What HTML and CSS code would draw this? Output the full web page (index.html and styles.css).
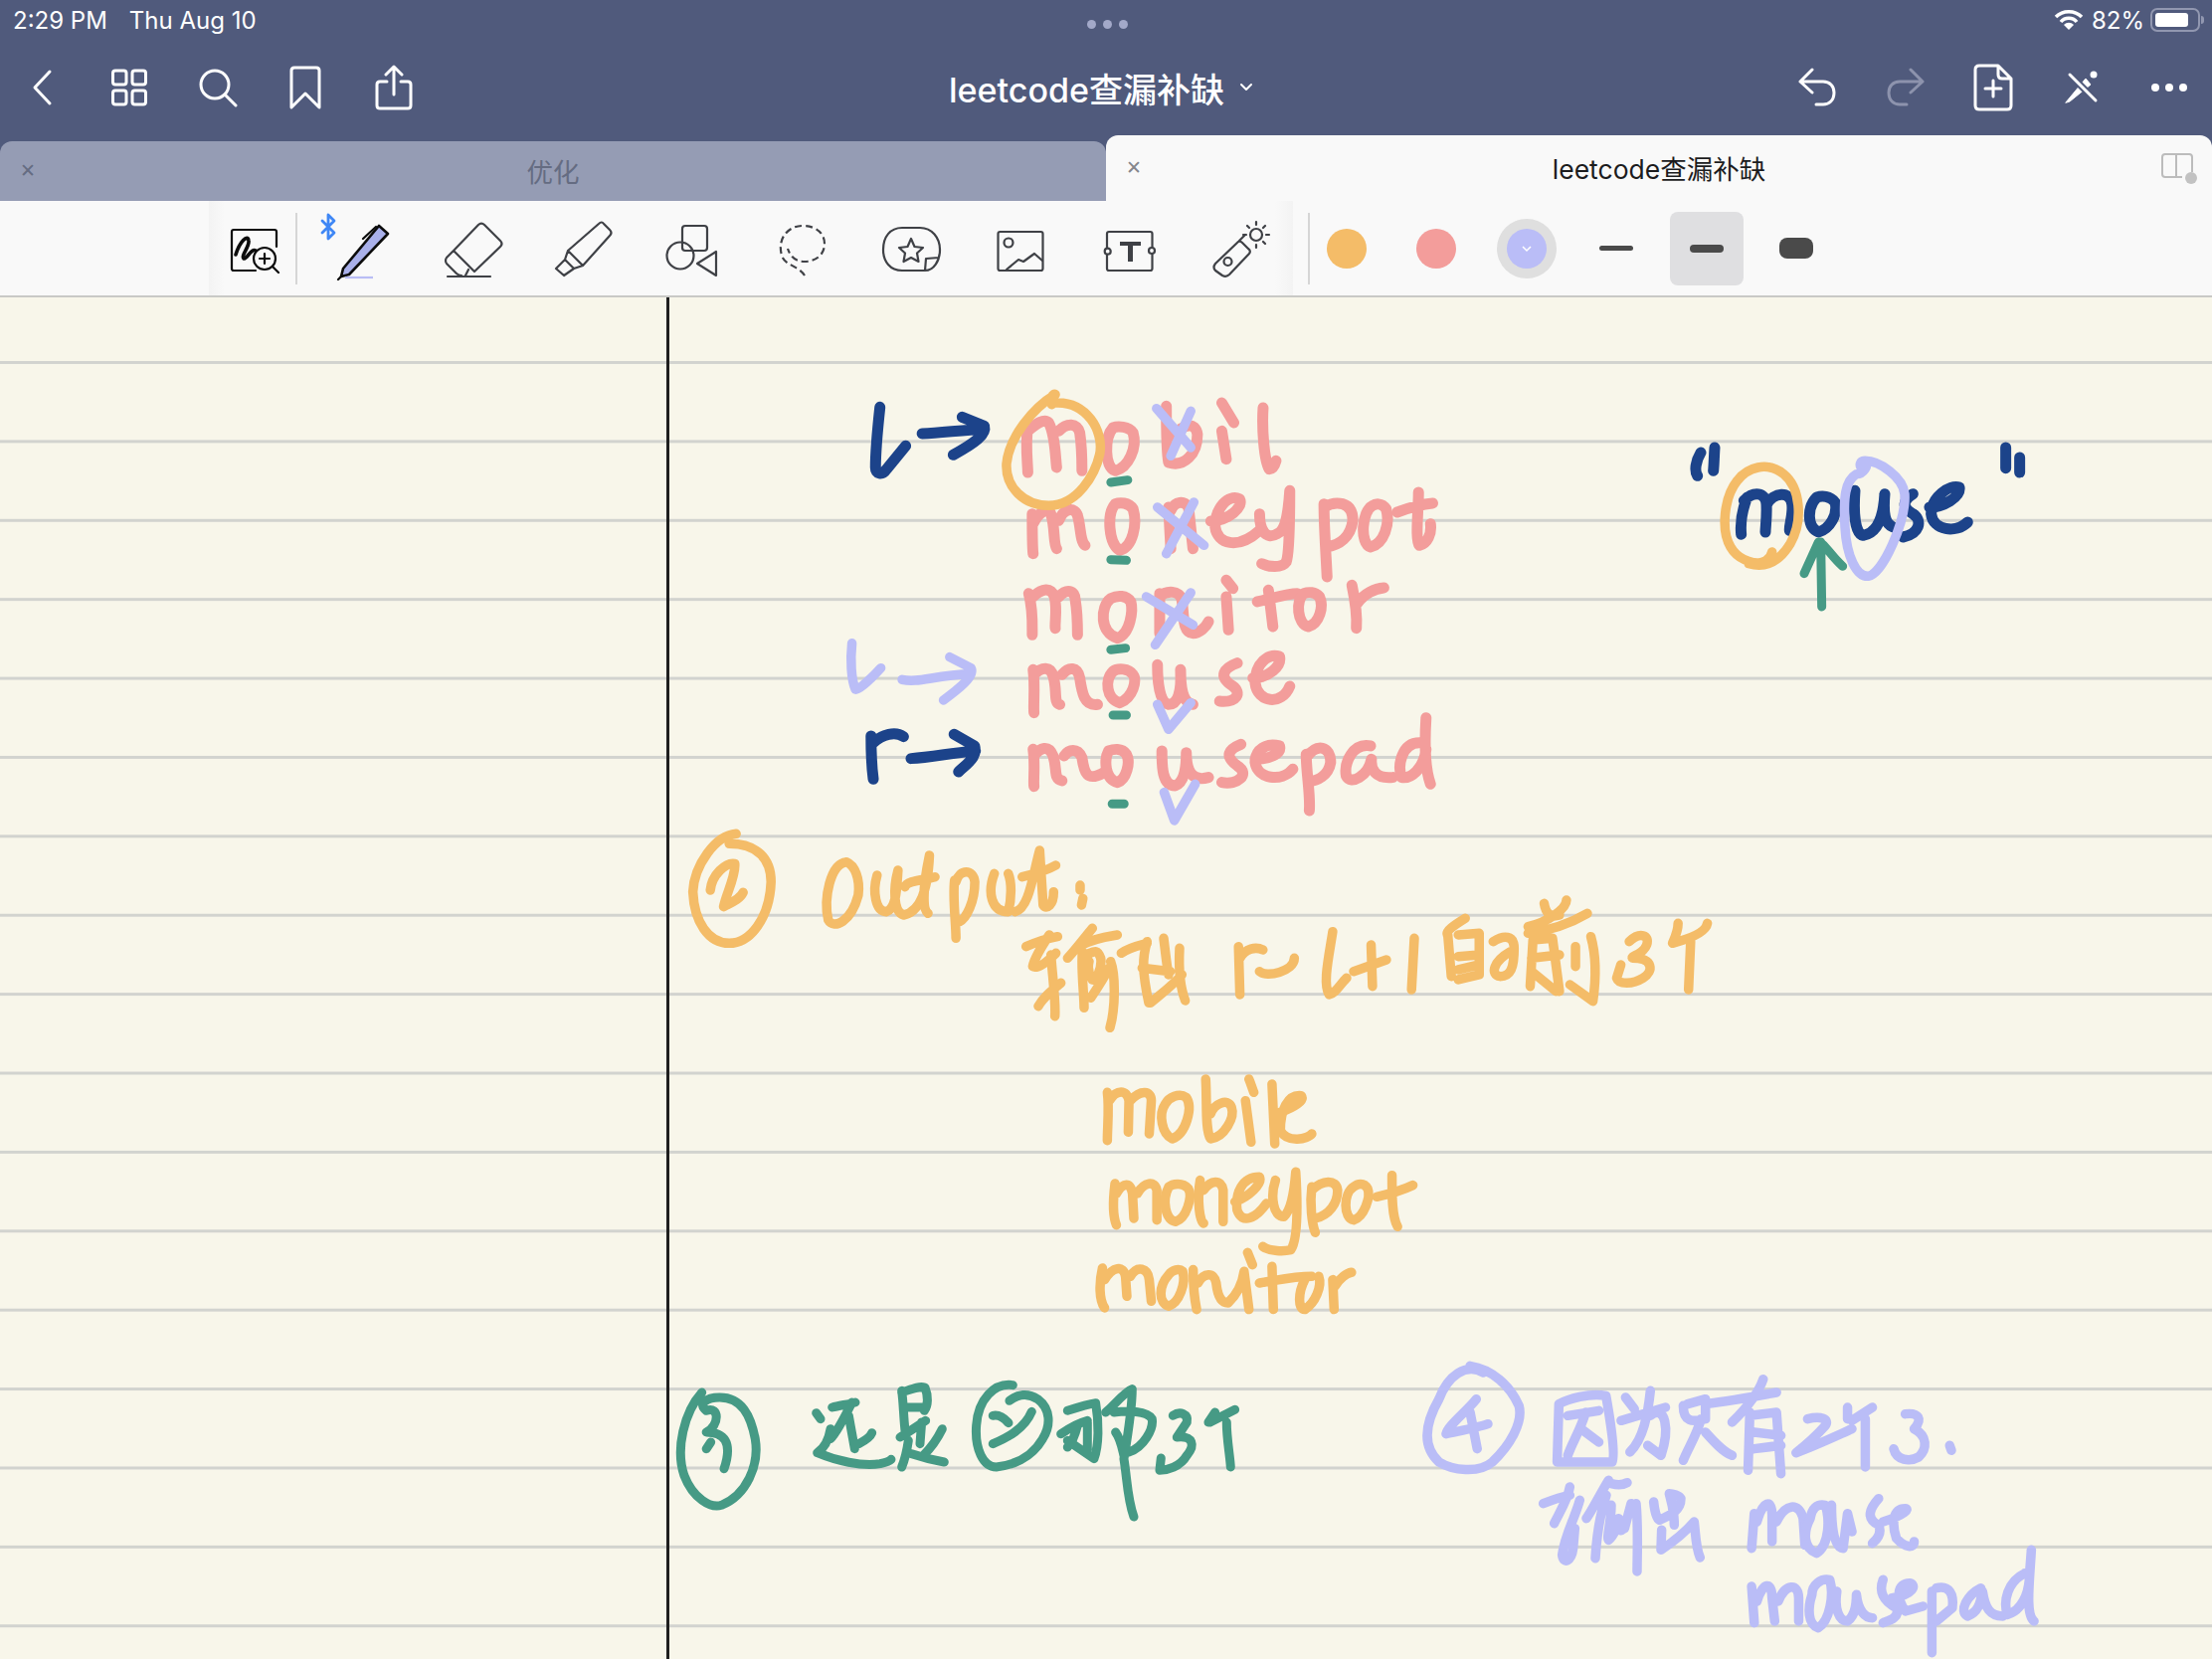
FILE: index.html
```html
<!DOCTYPE html>
<html lang="en">
<head>
  <meta charset="UTF-8">
  <title>leetcode查漏补缺</title>
  <link rel="stylesheet" href="styles.css">
</head>
<body>

  <header class="topbar">
    <div class="status">
      <div class="status-left"><span>2:29 PM</span><span>Thu Aug 10</span></div>
      <div class="grabber"><i></i><i></i><i></i></div>
      <div class="status-right">
        <svg width="30" height="22" viewBox="0 0 30 22"><path class="wifi" d="M2 8 C9 1 21 1 28 8 M7 13 C11 8 19 8 23 13"/><path class="wifi-tip" d="M15 21 L10 16 C13 13 17 13 20 16 Z"/></svg>
        <span>82%</span>
        <div class="battery"><div class="battery-fill"></div></div>
        <div class="battery-nub"></div>
      </div>
    </div>
    <nav class="nav">
      <div class="nav-group nav-left">
        <button class="nav-btn"><svg width="24" height="38" viewBox="0 0 24 38"><path d="M20 3 L5 19 L20 35"/></svg></button>
        <button class="nav-btn"><svg width="36" height="38" viewBox="0 0 36 38"><rect x="1.500" y="2" width="13.500" height="14" rx="2.500"/><rect x="21" y="2" width="13.500" height="14" rx="2.500"/><rect x="1.500" y="22" width="13.500" height="14" rx="2.500"/><rect x="21" y="22" width="13.500" height="14" rx="2.500"/></svg></button>
        <button class="nav-btn"><svg width="40" height="40" viewBox="0 0 40 40"><circle cx="17" cy="17" r="14"/><path d="M27 27 L38 38"/></svg></button>
        <button class="nav-btn"><svg width="34" height="44" viewBox="0 0 34 44"><path d="M3 5 Q3 2 6 2 H28 Q31 2 31 5 V42 L17 28 L3 42 Z"/></svg></button>
        <button class="nav-btn"><svg width="38" height="46" viewBox="0 0 38 46"><path d="M19 30 V3 M11 10 L19 2 L27 10 M12 17 H5 Q2 17 2 20 V41 Q2 44 5 44 H33 Q36 44 36 41 V20 Q36 17 33 17 H26"/></svg></button>
      </div>
      <div class="doc-title">leetcode查漏补缺<svg width="14" height="10" viewBox="0 0 14 10"><path d="M2 2 L7 7 L12 2"/></svg></div>
      <div class="nav-group nav-right">
        <button class="nav-btn"><svg width="40" height="40" viewBox="0 0 40 40"><path d="M15 2 L3 14 L15 25 M3 14 H26 C33 14 37 19 37 25 C37 33 32 37 26 37 H19"/></svg></button>
        <button class="nav-btn dim"><svg width="40" height="40" viewBox="0 0 40 40"><path d="M25 2 L37 14 L25 25 M37 14 H14 C7 14 3 19 3 25 C3 33 8 37 14 37 H21"/></svg></button>
        <button class="nav-btn"><svg width="40" height="48" viewBox="0 0 40 48"><path d="M25 2 H6 Q2 2 2 6 V42 Q2 46 6 46 H34 Q38 46 38 42 V15 Z M25 2 V11 Q25 15 29 15 H38 M20 17 V33 M12 25 H28"/></svg></button>
        <button class="nav-btn"><svg width="36" height="34" viewBox="0 0 36 34"><path class="nib" d="M2 32 L22 8 L27 14 L6 31 Z"/><path class="knock" d="M6 4 L32 30"/><path d="M6 4 L32 30"/><circle class="dot" cx="30" cy="4" r="3.500"/></svg></button>
        <button class="nav-btn"><svg width="38" height="10" viewBox="0 0 38 10"><circle class="dot" cx="5" cy="5" r="4"/><circle class="dot" cx="19" cy="5" r="4"/><circle class="dot" cx="33" cy="5" r="4"/></svg></button>
      </div>
    </nav>
  </header>

  <div class="tabs">
    <div class="tab tab-back">
      <span class="tab-close">✕</span>
      <span class="tab-name">优化</span>
    </div>
    <div class="tab tab-active">
      <span class="tab-close">✕</span>
      <span class="tab-name">leetcode查漏补缺</span>
      <svg class="split-icon" width="38" height="32" viewBox="0 0 38 32"><path d="M5 2 H29 Q32 2 32 5 V20 M5 2 Q2 2 2 5 V22 Q2 25 5 25 H22 M16 2 V25"/><circle cx="31" cy="26" r="6"/></svg>
    </div>
  </div>

  <div class="tools">
    <div class="tool-strip">
      <div class="tool tool-zoom">
        <svg class="ic" width="60" height="70" viewBox="0 0 60 70"><path class="k" d="M30 57 H8 Q6 57 6 55 V18 Q6 16 8 16 H49 Q51 16 51 18 V33"/><path class="k fat" d="M10 41 C14 28 22 20 23 27 C24 33 15 42 18 45 C21 46 26 34 30 37"/><circle class="k" cx="39" cy="45" r="11"/><path class="k" d="M47 53 L53 59 M39 40 V50 M34 45 H44"/></svg>
      </div>
      <div class="tool-sep"></div>
      <div class="tool">
        <svg class="ic" width="60" height="70" viewBox="0 0 60 70">
          <path class="bt" d="M-11 7 L1 19 L-5 25 V1 L1 7 L-11 19"/>
          <path class="k pen" d="M10 55 L46 12 L55 20 L16 61 L8 63 Z"/>
          <path class="k" d="M30 25 L43 13 M8 63 L5 66"/>
          <path class="pen-line" d="M12 64 H40"/>
        </svg>
      </div>
      <div class="tool">
        <svg class="ic" width="60" height="70" viewBox="0 0 60 70"><path class="g" d="M36 11 Q39 8 42 11 L58 27 Q61 30 58 33 L32 58 L11 37 Z M11 37 L4 44 Q2 47 4 50 L14 60 Q16 62 19 62 M26 56 L23 62 M5 63 H48"/></svg>
      </div>
      <div class="tool">
        <svg class="ic" width="60" height="70" viewBox="0 0 60 70"><path class="g" d="M47 10 Q50 7 52 10 L58 16 Q61 19 58 22 L31 52 L16 37 Z M16 37 L13 46 L22 55 L31 52 M13 46 L4 55 L12 62 L22 55"/></svg>
      </div>
      <div class="tool">
        <svg class="ic" width="60" height="70" viewBox="0 0 60 70"><rect class="g" x="21" y="12" width="25" height="25" rx="3"/><circle class="g" cx="19" cy="42" r="13.500"/><path class="g" d="M36 50 L55 38 V62 Z"/></svg>
      </div>
      <div class="tool">
        <svg class="ic" width="60" height="70" viewBox="0 0 60 70"><path class="g dash" d="M34 62 C28 52 14 52 11 42 C6 24 18 12 32 12 C46 12 54 20 54 30 C54 42 44 48 34 48 C26 48 20 44 17 35"/></svg>
      </div>
      <div class="tool">
        <svg class="ic" width="60" height="70" viewBox="0 0 60 70"><path class="g" d="M45 57 H22 C10 57 3 48 3 36 C3 23 10 14 22 14 H40 C52 14 60 24 60 36 C60 47 54 57 45 57 Z M45 57 L46 45 L59 44"/><path class="g" d="M31 25 L34.500 33 L43 34 L37 39.500 L38.500 48 L31 44 L23.500 48 L25 39.500 L19 34 L27.500 33 Z"/></svg>
      </div>
      <div class="tool">
        <svg class="ic" width="60" height="70" viewBox="0 0 60 70"><rect class="g" x="8.500" y="18" width="45" height="39" rx="2"/><circle class="g" cx="19" cy="29" r="4.500"/><path class="g" d="M17 56 L29 46 L34 48 L45 40 L53 47"/></svg>
      </div>
      <div class="tool">
        <svg class="ic" width="60" height="70" viewBox="0 0 60 70"><rect class="g" x="8" y="18" width="45.500" height="39" rx="2"/><path class="t-bar" d="M21 28 H42 V32 H34 V48 H29 V32 H21 Z"/><circle class="g hole" cx="8.700" cy="37.700" r="3"/><circle class="g hole" cx="53" cy="37" r="3"/></svg>
      </div>
      <div class="tool">
        <svg class="ic" width="60" height="70" viewBox="0 0 60 70"><path class="g" d="M30 28 L7 50 Q4 54 7 57 L14 62 Q18 64 21 61 L41 40 Q43 37 40 35 L34 29 Q32 27 30 28 Z M31 27 L37 21"/><circle class="g" cx="19.500" cy="48" r="4"/><circle class="g" cx="48" cy="21" r="6"/><path class="g" d="M48 8 V11 M48 31 V34 M35 21 H38 M58 21 H61 M39 12 L41 14 M55 28 L57 30 M57 12 L55 14"/></svg>
      </div>
    </div>
    <div class="tool-sep sep-right"></div>
    <div class="options">
      <div class="opt"><div class="swatch sw-orange"></div></div>
      <div class="opt"><div class="swatch sw-pink"></div></div>
      <div class="opt"><div class="swatch-ring"><div class="swatch sw-purple"><svg width="10" height="8" viewBox="0 0 10 8"><path d="M1 2 L5 6 L9 2"/></svg></div></div></div>
      <div class="opt"><div class="line line-s"></div></div>
      <div class="opt opt-on"><div class="line line-m"></div></div>
      <div class="opt"><div class="line line-l"></div></div>
    </div>
  </div>

  <main class="page">
    <svg class="ink" viewBox="0 299 2224 1369" role="img" aria-label="handwritten notes on the sliding window over mobile, moneypot, monitor, mouse, mousepad">
      <!-- first block, traced at 0.4464 / 0.3333 -->
      <g transform="translate(820 370) scale(.4464 .3333)">
        <g class="pen-navy">
          <path d="M145 118 C140 180 135 250 135 300 C135 320 150 325 160 305 L203 235"/>
          <path d="M240 198 C290 195 340 185 378 185 M330 148 L380 175 C385 200 360 225 310 262"/>
          <path d="M130 1240 C125 1190 125 1140 125 1110 M130 1130 C150 1105 180 1095 198 1112"/>
          <path d="M215 1178 C260 1175 310 1160 360 1155 M312 1105 L358 1140 C365 1175 340 1195 322 1218"/>
        </g>
        <g class="pen-pink">
          <path d="M478 180 C472 230 478 290 478 315 M478 190 C495 170 515 150 525 165 C540 200 540 270 543 300 M548 190 C565 165 590 165 595 195 C600 240 600 280 600 310"/>
          <path d="M670 180 C650 210 650 300 675 310 C705 300 725 240 715 195 C705 175 680 175 670 180"/>
          <path d="M790 115 C790 170 790 250 795 285 C830 300 860 260 860 200 C855 160 830 170 800 205"/>
          <path d="M915 105 L942 165 M915 190 L925 275 M1008 120 C1005 180 1010 280 1022 305 C1032 305 1035 290 1037 280"/>

          <path d="M488 440 C488 490 488 540 490 560 M490 470 C505 430 525 420 530 440 C540 480 535 530 543 545 M548 460 C560 420 585 420 590 445 C598 480 595 520 607 535"/>
          <path d="M675 410 C655 440 660 530 685 550 C715 540 725 470 715 425 C705 405 685 405 675 410"/>
          <path d="M795 420 L800 545 M800 430 C810 400 830 400 840 420 L850 545"/>
          <path d="M890 462 C930 460 965 420 955 395 C930 380 900 420 900 480 C905 530 950 550 1000 490"/>
          <path d="M1000 440 C1000 490 1015 520 1040 500 C1060 490 1065 430 1068 370 C1068 450 1068 560 1060 585 C1050 605 1020 600 1005 590"/>
          <path d="M1145 410 C1145 480 1150 570 1152 630 M1145 420 C1170 400 1210 400 1210 460 C1205 510 1180 535 1150 540"/>
          <path d="M1255 415 C1230 430 1225 530 1250 540 C1280 530 1295 470 1285 425 C1275 405 1260 410 1255 415"/>
          <path d="M1358 375 C1358 430 1350 520 1360 535 C1378 530 1388 500 1385 470 M1310 435 C1340 420 1370 410 1390 408"/>

          <path d="M480 680 C490 730 488 780 488 805 M490 690 C510 665 530 660 538 690 C545 730 538 770 540 785 M548 690 C565 665 585 670 585 700 C590 740 590 780 590 805"/>
          <path d="M665 695 C640 720 640 800 680 815 C710 800 715 730 710 705 C700 685 680 685 665 695"/>
          <path d="M775 680 L775 800 M775 690 C790 670 820 670 825 700 C830 740 825 800 850 800 C865 800 880 780 885 765"/>
          <path d="M925 640 L940 665 M925 690 L930 790 M1020 670 L1030 780 M995 705 C1030 695 1060 680 1085 680"/>
          <path d="M1100 680 C1080 700 1085 775 1110 780 C1135 770 1145 720 1135 690 C1125 675 1110 675 1100 680"/>
          <path d="M1208 655 C1215 700 1220 750 1218 785 M1220 710 C1235 680 1260 665 1280 663"/>

          <path d="M490 910 C495 960 490 1020 492 1040 M492 925 C510 900 530 900 535 930 C545 970 535 1010 550 1015 M555 925 C570 900 590 900 595 935 C600 980 605 1020 635 1015"/>
          <path d="M670 915 C650 940 655 1000 685 1010 C715 995 725 940 715 925 C705 905 680 905 670 915"/>
          <path d="M770 895 C770 950 775 1010 795 1015 C815 1015 825 980 822 910 C822 960 825 1010 850 1015"/>
          <path d="M950 890 C920 905 905 930 940 960 C960 980 950 1010 910 1005"/>
          <path d="M985 935 C1020 935 1050 900 1045 870 C1020 860 990 890 990 950 C995 1010 1050 1020 1068 960"/>

          <path d="M490 1150 C495 1200 490 1240 492 1262 M492 1170 C505 1145 525 1135 535 1170 C545 1210 535 1240 555 1245 M560 1170 C570 1150 590 1145 600 1175 C605 1220 610 1250 650 1220"/>
          <path d="M660 1155 C650 1180 650 1240 680 1250 C700 1240 710 1190 700 1165 C690 1145 670 1150 660 1155"/>
          <path d="M780 1155 C780 1200 780 1260 810 1260 C830 1250 835 1210 835 1160 C835 1210 845 1250 885 1235"/>
          <path d="M958 1135 C930 1150 920 1170 950 1200 C980 1225 950 1260 915 1250"/>
          <path d="M990 1180 C1020 1180 1050 1165 1045 1140 C1015 1130 990 1150 990 1190 C995 1240 1050 1250 1075 1210"/>
          <path d="M1105 1165 C1105 1220 1115 1290 1112 1335 M1105 1175 C1130 1130 1160 1140 1160 1190 C1155 1230 1130 1245 1110 1248"/>
          <path d="M1250 1140 C1210 1130 1190 1190 1195 1230 C1205 1260 1245 1230 1252 1180 C1250 1210 1260 1240 1300 1235"/>
          <path d="M1360 1130 C1320 1130 1310 1200 1320 1235 C1340 1240 1370 1210 1375 1150 M1375 1055 C1372 1120 1370 1200 1385 1255"/>
        </g>
        <g class="pen-orange">
          <path d="M532 110 C528 90 535 75 540 80 C490 120 435 210 430 290 C428 360 470 415 525 415 C590 415 630 320 640 260 C650 190 610 100 540 105"/>
        </g>
        <g class="pen-purple">
          <path d="M768 122 L845 240 M845 130 L800 265 M770 420 L875 535 M852 405 L790 560 M745 690 L850 775 M845 678 L765 835"/>
          <path d="M82 830 C78 880 80 940 90 970 C100 970 130 930 147 905 M195 940 C230 950 260 930 350 922 M302 872 L350 905 C360 930 320 970 288 1002"/>
          <path d="M770 1015 L795 1090 L845 1010 M785 1280 L808 1365 L855 1255"/>
        </g>
        <g class="pen-green">
          <path d="M665 345 L703 338 M665 578 L700 580 M665 850 L698 845 M670 1047 L700 1047 M668 1315 L695 1315"/>
        </g>
      </g>

      <!-- "mouse" on the right, traced at 3x -->
      <g transform="translate(1660 420) scale(.3333)">
        <g class="pen-navy">
          <path d="M150 105 C135 130 130 160 140 175 M192 90 C190 120 190 140 188 160 M1070 90 L1070 152 M1112 120 L1112 165"/>
          <path d="M290 240 C270 290 270 330 272 352 M280 250 C310 220 345 225 348 260 C350 300 345 330 345 345 M350 260 C370 225 420 220 425 260 C430 290 415 330 418 340"/>
          <path d="M500 240 C470 270 470 330 505 345 C540 335 565 290 555 255 C540 235 515 235 500 240"/>
          <path d="M615 220 C610 290 615 350 640 355 C670 350 700 320 705 230 C700 290 705 320 730 330"/>
          <path d="M790 230 C760 250 755 270 790 290 C820 310 810 350 760 360"/>
          <path d="M840 270 C880 270 935 240 930 210 C900 200 845 240 845 290 C850 340 920 350 955 315"/>
        </g>
        <path class="pen-orange" d="M365 405 C360 430 340 440 295 440 C350 455 390 430 420 380 C460 310 450 210 400 170 C350 130 290 150 260 190 C220 240 210 340 240 390 C260 425 300 440 340 440"/>
        <path class="pen-purple" d="M645 135 C660 140 640 170 620 170 C585 190 580 240 585 330 C590 420 620 480 655 478 C700 470 770 310 765 230 C760 180 690 130 645 130 C630 130 625 145 640 155"/>
        <path class="pen-green" d="M515 570 L512 375 M462 470 L505 375 C520 375 545 420 578 448"/>
      </g>

      <!-- orange block, traced at 0.7015 / 0.3333 -->
      <g class="pen-orange" transform="translate(670 820) scale(.7015 .3333)">
        <path d="M100 55 C70 60 40 150 38 230 C40 320 60 385 90 385 C120 385 148 310 150 200 C150 130 130 85 90 85 M63 225 C65 180 85 140 98 145 C100 180 85 240 82 275 C90 265 105 255 110 232"/>
        <path d="M258 140 C235 145 225 250 232 315 C240 345 265 320 275 240 C278 190 270 150 258 140"/>
        <path d="M302 180 C295 230 300 290 315 290 C330 280 330 220 332 165 C325 220 325 290 340 300 C365 290 375 220 377 120 C370 190 365 280 375 295 M342 215 C345 195 370 195 385 185"/>
        <path d="M413 195 C410 250 415 320 415 370 M415 200 C420 160 440 160 442 200 C442 260 430 310 420 320"/>
        <path d="M470 175 C460 230 465 290 490 290 C495 250 495 200 490 175 M535 105 L540 270 C545 285 555 270 555 230 M510 185 C530 175 550 160 558 150 M535 105 C525 180 520 280 500 290"/>
        <path d="M593 210 L593 225 M597 250 L595 270"/>

        <path d="M820 395 L822 540 M822 430 C830 400 845 395 855 405 M850 470 C860 490 900 470 900 430"/>
        <path d="M955 350 C950 420 940 510 950 540 C960 535 965 510 975 490 M1010 390 L1012 515 M985 470 L1032 435 M1072 370 L1068 525"/>
        <path d="M1145 310 C1130 330 1115 350 1120 360 L1125 485 M1135 360 L1165 355 L1165 480 L1135 495 M1135 425 L1165 420 M1135 465 L1165 450"/>
        <path d="M1185 380 C1200 360 1215 360 1215 400 C1215 460 1210 485 1195 485 C1180 480 1185 440 1210 410"/>
        <path d="M1258 265 C1260 290 1265 310 1280 300 M1290 255 C1290 280 1265 320 1235 335 M1235 355 C1270 345 1300 320 1320 295 M1242 375 L1238 515 M1242 375 L1270 370 L1280 530 M1240 430 L1280 420 M1240 470 L1275 530 M1303 395 L1303 455 M1325 365 C1335 440 1330 530 1328 560 L1295 510"/>
        <path d="M1380 380 C1395 350 1410 360 1405 390 C1400 420 1380 425 1385 430 C1415 430 1415 470 1400 490 C1385 510 1365 510 1362 490 L1368 450"/>
        <path d="M1450 325 C1450 350 1445 370 1442 385 C1470 370 1490 350 1492 325 M1468 380 L1465 525"/>

        <path d="M632 835 C635 880 632 940 632 980 M635 860 C645 825 660 825 663 860 L662 955 M665 860 C680 825 695 830 695 860 L692 960"/>
        <path d="M715 870 C705 900 710 960 725 975 C745 960 755 880 745 850 C735 835 720 850 715 870"/>
        <path d="M773 795 C775 870 772 950 780 975 C800 970 815 910 810 880 C805 850 785 870 780 900"/>
        <path d="M835 795 C838 810 840 825 842 835 M830 860 L838 985 M868 810 L872 990 M880 895 C900 880 915 860 910 845 C890 840 880 890 880 950 C890 990 920 975 925 960"/>

        <path d="M643 1110 C640 1160 640 1210 645 1235 M645 1140 C655 1105 665 1105 668 1140 L670 1215 M675 1140 C685 1105 700 1100 703 1130 L703 1220"/>
        <path d="M720 1120 C710 1160 715 1220 730 1225 C745 1215 755 1150 748 1125 C740 1105 725 1110 720 1120"/>
        <path d="M765 1100 C760 1160 765 1230 770 1230 M770 1130 C780 1100 795 1095 798 1130 L798 1225"/>
        <path d="M815 1165 C835 1150 855 1110 850 1090 C825 1090 815 1140 818 1190 C825 1235 845 1215 860 1170"/>
        <path d="M873 1100 C865 1150 870 1210 885 1210 C895 1190 900 1130 902 1075 C905 1180 905 1280 895 1310 C885 1315 865 1315 855 1300"/>
        <path d="M925 1120 C922 1170 925 1230 930 1258 M925 1130 C940 1100 960 1095 962 1130 C962 1170 950 1205 930 1215"/>
        <path d="M985 1120 C970 1140 970 1215 985 1220 C1000 1210 1010 1150 1005 1125 C1000 1105 990 1110 985 1120"/>
        <path d="M1040 1085 C1040 1150 1040 1210 1048 1240 M1018 1150 C1040 1140 1060 1125 1070 1115"/>

        <path d="M625 1365 C620 1410 620 1460 628 1485 M628 1400 C640 1360 655 1355 658 1390 L660 1450 M665 1390 C675 1355 690 1365 692 1400 L695 1465"/>
        <path d="M720 1385 C705 1420 705 1470 720 1480 C735 1470 745 1410 740 1375 C735 1365 725 1370 720 1385"/>
        <path d="M755 1370 C755 1420 758 1470 760 1490 M762 1410 C770 1380 785 1375 788 1410 C790 1450 795 1470 805 1470 C815 1450 825 1420 828 1375 L835 1490"/>
        <path d="M833 1318 L840 1355 M868 1360 L870 1490 M850 1410 C880 1400 900 1390 925 1390"/>
        <path d="M915 1400 C905 1440 905 1490 915 1490 C930 1470 940 1420 935 1390 M955 1400 L957 1490 M958 1420 C965 1395 975 1380 982 1378"/>
      </g>

      <!-- the two orange characters under Output, traced at 3x -->
      <g class="pen-orange" transform="translate(1020 900) scale(.3333)">
        <path d="M35 155 C70 140 100 130 130 125 M105 120 C85 150 60 190 55 215 C70 225 100 200 125 175 M110 180 C115 250 125 320 122 365 M140 265 C110 290 85 310 72 335"/>
        <path d="M235 100 C210 130 180 170 160 190 M205 150 C240 130 280 125 310 120 M205 170 C200 220 210 300 210 340 M215 180 C240 170 250 160 260 190 C265 220 245 260 235 255 C225 240 220 220 225 200 M290 200 C305 240 305 340 288 400 M230 310 C250 280 270 250 285 220"/>
        <path d="M322 175 C350 155 385 150 400 145 M400 140 C385 190 385 230 405 325 M450 130 C455 170 460 220 465 240 M498 160 C495 220 500 280 515 318 M410 325 C440 300 480 270 505 240 M385 220 L470 230"/>
      </g>

      <!-- green line, traced at 3x -->
      <g class="pen-green" transform="translate(810 1380) scale(.3333)">
        <path d="M32 122 L45 140 M80 105 C100 100 130 95 150 90 M140 90 C120 130 95 180 75 200 M130 130 L148 230 M160 215 C180 205 195 195 200 182 M75 170 C70 200 60 225 35 242 C90 265 170 285 225 275 C245 270 255 265 258 262"/>
        <path d="M290 55 C295 90 295 130 300 175 M290 60 C320 50 340 40 360 45 C370 70 370 100 358 115 M305 105 L360 105 M285 195 C310 180 340 160 362 145 M350 150 L345 215 M412 170 C395 205 375 230 355 250 M310 205 C305 240 298 265 290 285 M320 245 C350 255 390 265 418 270"/>
        <path d="M625 38 C570 30 520 80 515 160 C510 230 535 285 575 285 C620 280 680 260 715 200 C740 160 740 110 700 80 C670 60 640 65 615 85 M565 130 C590 125 610 150 612 152 M682 118 C660 170 610 195 565 215"/>
        <path d="M790 115 C820 105 850 95 875 92 C885 150 885 220 870 260 L790 205 M770 185 C800 165 830 150 850 145 M820 160 C810 200 800 215 790 225 M850 150 L850 230"/>
        <path d="M985 50 C960 60 930 100 905 120 M985 50 C985 100 970 200 960 260 C970 320 970 380 990 435 M930 120 C970 115 1030 115 1045 140 C1050 170 1020 225 975 240 M935 180 C950 200 955 230 960 250"/>
        <path d="M1108 130 C1130 115 1155 125 1150 150 L1120 195 C1170 190 1175 220 1150 250 C1130 285 1090 295 1068 295 L1072 258"/>
        <path d="M1215 150 L1235 120 M1295 112 L1220 150 M1270 150 C1270 200 1280 250 1282 285"/>
      </g>

      <!-- purple characters on the second line, traced at 3x -->
      <g class="pen-purple" transform="translate(1540 1470) scale(.3333)">
        <path d="M35 125 C60 115 85 105 115 100 M115 75 C110 110 85 150 68 185 M145 115 C130 170 100 220 92 280 C95 310 120 300 125 260 L130 200 M232 55 C210 90 180 150 165 170 M240 65 C260 70 275 70 288 62 M225 100 C205 160 195 240 192 290 M240 130 C240 180 225 230 232 235 C250 220 260 190 262 170 C270 220 265 205 280 200 L300 125 M315 125 C322 200 318 280 318 330"/>
        <path d="M368 120 C370 140 375 170 385 175 C420 160 450 145 450 110 C445 100 425 95 415 95 C425 130 430 170 430 190 M392 205 L390 265 C420 245 460 215 490 180 C495 220 495 260 508 288"/>
      </g>

      <!-- bottom block, traced at 0.8929 / 0.3333 -->
      <g transform="translate(670 1340) scale(.8929 .3333)">
        <g class="pen-green">
          <path d="M40 180 C20 240 10 350 20 430 C30 500 50 530 62 520 C90 490 105 400 100 320 C95 250 85 195 60 195 C45 195 35 215 45 235 C60 220 60 280 45 300 C65 300 75 330 65 410 M50 330 L45 350"/>
        </g>
        <g class="pen-purple">
          <path d="M920 120 C900 90 880 130 870 200 C855 270 850 340 870 390 C885 415 915 425 930 390 C950 340 965 270 960 220 C950 160 930 110 905 100 M912 200 C900 240 880 280 878 305 C895 295 915 285 925 275 M905 240 L913 350"/>
          <path d="M1005 215 L1003 390 L1065 390 C1070 380 1062 250 1058 190 C1040 180 1015 200 1005 215 M1015 250 L1050 235 M1035 240 C1030 290 1020 330 1015 370 M1030 290 L1050 330"/>
          <path d="M1080 195 L1090 230 M1075 265 L1125 225 M1108 175 C1105 250 1100 320 1085 360 M1108 250 C1125 215 1130 290 1120 370 L1105 340"/>
          <path d="M1145 220 C1145 270 1155 270 1170 260 L1170 200 L1150 215 M1165 260 C1160 310 1150 350 1145 385 M1170 300 C1180 330 1190 360 1200 370"/>
          <path d="M1235 140 C1230 180 1215 230 1200 270 M1170 215 C1200 205 1230 190 1250 180 M1220 240 L1218 415 M1220 250 L1250 240 L1255 425 M1225 300 L1255 310 M1225 350 L1255 340"/>
          <path d="M1285 260 C1300 250 1310 260 1305 280 C1295 310 1280 345 1272 362 C1290 345 1310 320 1335 290 M1330 225 L1330 260 M1335 265 L1358 225 M1350 260 L1350 405"/>
          <path d="M1395 245 C1410 240 1415 260 1405 290 C1420 310 1420 350 1410 375 C1400 390 1385 385 1382 350 M1445 340 L1447 355"/>

          <path d="M1225 545 L1222 650 M1228 570 C1235 505 1245 500 1245 550 L1245 630 M1250 570 C1260 515 1275 510 1280 560 L1282 640"/>
          <path d="M1288 560 C1280 600 1280 650 1295 665 C1310 640 1310 560 1305 520 C1295 515 1290 530 1288 560 M1312 520 C1312 590 1315 650 1325 650 L1330 545 L1335 600"/>
          <path d="M1365 500 C1355 530 1350 560 1365 580 C1370 610 1360 630 1358 635 M1370 570 C1395 550 1400 530 1395 530 C1380 530 1380 580 1385 620 C1395 650 1405 650 1405 630"/>

          <path d="M1222 765 L1225 875 M1228 810 C1235 750 1245 750 1245 800 L1248 870 M1252 810 C1260 755 1275 755 1275 800 L1275 870"/>
          <path d="M1290 790 C1285 830 1285 880 1297 890 C1310 870 1315 790 1310 745 C1300 740 1290 760 1290 790 M1318 780 C1315 830 1320 870 1330 870 C1340 850 1340 810 1340 790 C1342 840 1350 860 1358 860"/>
          <path d="M1370 745 C1365 780 1370 810 1385 830 C1390 860 1375 870 1370 875 M1380 800 C1405 790 1408 760 1400 755 C1385 755 1385 800 1395 840 L1415 825"/>
          <path d="M1425 780 L1425 965 M1430 770 C1445 760 1450 790 1448 830 L1430 870 M1480 770 C1465 790 1455 840 1465 855 C1480 840 1480 800 1482 780 C1485 830 1490 855 1505 855"/>
          <path d="M1530 725 C1510 750 1505 810 1510 850 C1525 840 1535 790 1535 725 L1537 655 C1535 750 1530 850 1540 870"/>
        </g>
      </g>
    </svg>
  </main>

</body>
</html>
```

FILE: styles.css
```css
* {
  box-sizing: border-box;
}
body {
  margin: 0;
  width: 2224px;
  height: 1668px;
  overflow: hidden;
  display: flex;
  flex-direction: column;
  background-color: #f8f6ea;
  font-family: Inter, "Noto Sans CJK SC", sans-serif;
}

/* top bar */
.topbar {
  background-color: #505a7c;
  color: #fff;
}
.status {
  height: 40px;
  display: grid;
  grid-template-columns: 1fr auto 1fr;
  align-items: center;
  padding: 0 8px 0 13px;
  font-size: 24px;
}
.status-left {
  display: flex;
  gap: 22px;
}
.grabber {
  display: flex;
  gap: 7px;
  margin: 8px 3px 0 0;
}
.grabber i {
  width: 9px;
  height: 9px;
  border-radius: 50%;
  background-color: #a3a9c9;
}
.status-right {
  display: flex;
  justify-content: flex-end;
  align-items: center;
}
.status-right span {
  margin: 0 6px 0 8px;
}
.wifi {
  fill: none;
  stroke: #fff;
  stroke-width: 3.5;
}
.wifi-tip {
  fill: #fff;
}
.battery {
  width: 50px;
  height: 24px;
  border: 2px solid #9197b0;
  border-radius: 7px;
  padding: 3px;
}
.battery-fill {
  width: 82%;
  height: 100%;
  background-color: #fff;
  border-radius: 3px;
}
.battery-nub {
  width: 3px;
  height: 8px;
  margin-left: 1px;
  border-radius: 0 3px 3px 0;
  background-color: #9197b0;
}

.nav {
  height: 96px;
  display: grid;
  grid-template-columns: 1fr auto 1fr;
  align-items: center;
}
.nav-group {
  display: flex;
  gap: 28.4px;
}
.nav-left {
  padding-left: 12px;
}
.nav-right {
  justify-content: flex-end;
  padding-right: 13px;
}
.nav-btn {
  width: 60px;
  height: 60px;
  padding: 0;
  border: none;
  background: transparent;
  display: flex;
  align-items: center;
  justify-content: center;
}
.nav-btn svg path,
.nav-btn svg rect,
.nav-btn svg circle {
  fill: none;
  stroke: #fff;
  stroke-width: 3;
  stroke-linecap: round;
  stroke-linejoin: round;
}
.nav-btn svg .dot {
  fill: #fff;
  stroke: none;
}
.nav-btn svg .nib {
  fill: #fff;
  stroke-width: 1;
}
.nav-btn svg .knock {
  stroke: #505a7c;
  stroke-width: 7;
}
.nav-btn.dim svg path {
  stroke: #8d93ad;
}
.doc-title {
  display: flex;
  align-items: center;
  gap: 15px;
  font-size: 34px;
  font-weight: 500;
  padding-right: 10px;
}
.doc-title svg path {
  fill: none;
  stroke: #fff;
  stroke-width: 2;
  stroke-linecap: round;
  stroke-linejoin: round;
}

/* tabs */
.tabs {
  height: 66px;
  display: flex;
  align-items: flex-end;
  background-color: #505a7c;
}
.tab {
  flex: 1;
  display: flex;
  align-items: center;
  justify-content: center;
  position: relative;
  border-radius: 12px 12px 0 0;
  padding-bottom: 2px;
}
.tab-back {
  height: 60px;
  background-color: #959cb4;
  color: #656c82;
}
.tab-active {
  height: 66px;
  background-color: #f9f9f9;
  color: #1c1c1e;
}
.tab-name {
  font-size: 26.5px;
}
.tab-close {
  position: absolute;
  left: 20px;
  font-size: 19px;
  font-family: "DejaVu Sans", sans-serif;
  color: #85868c;
}
.tab-back .tab-close {
  color: #656c82;
}
.split-icon {
  position: absolute;
  right: 14px;
  top: 17px;
}
.split-icon path {
  fill: none;
  stroke: #bcbcbc;
  stroke-width: 2;
}
.split-icon circle {
  fill: #c2c2c2;
}

/* tool strip */
.tools {
  height: 97px;
  display: flex;
  align-items: center;
  padding-left: 210px;
  background-color: #f9f9f9;
  border-bottom: 2px solid #c9c9c6;
}
.tool-strip {
  width: 1090px;
  height: 95px;
  display: flex;
  align-items: center;
  background: linear-gradient(90deg, #f3f3f3, #f9f9f9 16px, #f9f9f9 calc(100% - 18px), #f3f3f3);
}
.tool {
  width: 110px;
  height: 95px;
  flex: none;
  display: flex;
  align-items: center;
  justify-content: center;
}
.tool-zoom {
  width: 87px;
  padding-left: 7px;
}
.tool-sep {
  width: 2px;
  height: 72px;
  flex: none;
  margin-right: 11px;
  background-color: #d6d6d6;
}
.sep-right {
  margin: 0 0 0 15px;
}
.ic {
  overflow: visible;
}
.ic path,
.ic rect,
.ic circle,
.ic ellipse {
  fill: none;
  stroke-width: 2.2;
  stroke-linecap: round;
  stroke-linejoin: round;
}
.ic .g {
  stroke: #3f4146;
}
.ic .k {
  stroke: #0c0c0c;
}
.ic .fat {
  stroke-width: 3.6;
}
.ic .pen {
  fill: #a9b0ea;
  stroke-width: 2.6;
}
.ic .bt {
  stroke: #3f87f5;
  stroke-width: 2.8;
}
.ic .pen-line {
  stroke: #b9bdf5;
  stroke-linecap: butt;
}
.ic .dash {
  stroke-dasharray: 7 4;
  stroke-linecap: butt;
}
.ic .hole {
  fill: #f9f9f9;
}
.ic .t-bar {
  fill: #3f4146;
  stroke: none;
}

/* colours and widths */
.options {
  display: flex;
  gap: 16.4px;
}
.opt {
  width: 74px;
  height: 74px;
  display: flex;
  align-items: center;
  justify-content: center;
  border-radius: 8px;
}
.opt-on {
  background-color: #dfdfe1;
}
.swatch {
  width: 40px;
  height: 40px;
  border-radius: 50%;
  display: flex;
  align-items: center;
  justify-content: center;
}
.sw-orange {
  background-color: #f4bc68;
}
.sw-pink {
  background-color: #f39d9b;
}
.sw-purple {
  background-color: #babdf7;
}
.sw-purple svg path {
  fill: none;
  stroke: #fff;
  stroke-width: 1.5;
}
.swatch-ring {
  width: 60px;
  height: 60px;
  border-radius: 50%;
  display: flex;
  align-items: center;
  justify-content: center;
  background-color: #dfdfdf;
}
.line {
  width: 34px;
  background-color: #4a4a4a;
}
.line-s {
  height: 5px;
  border-radius: 3px;
}
.line-m {
  height: 8px;
  border-radius: 4px;
}
.line-l {
  height: 21px;
  border-radius: 8px;
}

/* note page */
.page {
  flex: 1;
  position: relative;
  background:
    linear-gradient(#1f1f1f, #1f1f1f) 670px 0 / 3px 100% no-repeat,
    linear-gradient(#d2d3cf 3px, transparent 3px) 0 64px / 100% 79.4px,
    #f8f6ea;
}
.ink {
  position: absolute;
  left: 0;
  top: 0;
  width: 2224px;
  height: 100%;
}
.ink path {
  fill: none;
  stroke-linecap: round;
  stroke-linejoin: round;
  vector-effect: non-scaling-stroke;
}
.pen-navy { stroke: #1c438a; stroke-width: 11px; }
.pen-pink { stroke: #f39d9b; stroke-width: 11px; }
.pen-orange { stroke: #f4bc68; stroke-width: 9.5px; }
.pen-green { stroke: #469a85; stroke-width: 9px; }
.pen-purple { stroke: #babdf7; stroke-width: 9.5px; }
```
